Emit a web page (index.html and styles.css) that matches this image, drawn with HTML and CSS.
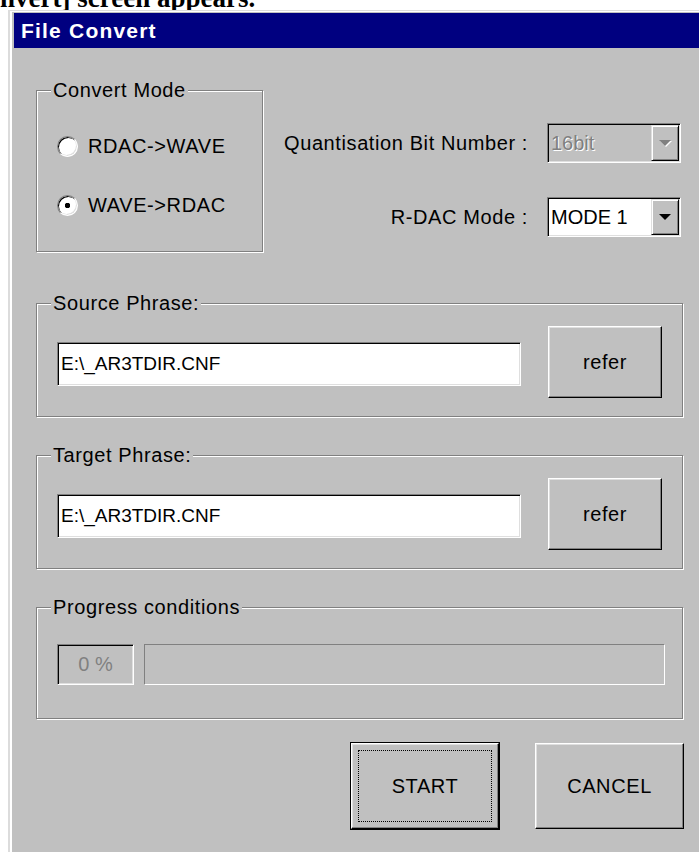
FILE: index.html
```html
<!DOCTYPE html>
<html lang="en">
<head>
<meta charset="utf-8">
<title>File Convert</title>
<link rel="stylesheet" href="styles.css">
</head>
<body>
  <div class="caption"><div class="caption-text">nvert] screen appears.</div></div>

  <div class="window">
    <div class="titlebar">File Convert</div>

    <div class="client">
      <div class="top-row">
        <div class="group mode-group">
          <div class="group-title">Convert Mode</div>
          <div class="radio-list">
            <div class="radio-row"><span class="radio"></span><span>RDAC-&gt;WAVE</span></div>
            <div class="radio-row"><span class="radio checked"></span><span>WAVE-&gt;RDAC</span></div>
          </div>
        </div>

        <div class="settings">
          <div class="setting-row">
            <span>Quantisation Bit Number :</span>
            <div class="combo disabled">
              <span class="combo-value">16bit</span>
              <span class="combo-btn"><span class="arrow"></span></span>
            </div>
          </div>
          <div class="setting-row">
            <span>R-DAC Mode :</span>
            <div class="combo">
              <span class="combo-value">MODE 1</span>
              <span class="combo-btn"><span class="arrow"></span></span>
            </div>
          </div>
        </div>
      </div>

      <div class="group path-group">
        <div class="group-title">Source Phrase:</div>
        <div class="path-row">
          <div class="textbox">E:\_AR3TDIR.CNF</div>
          <div class="button refer">refer</div>
        </div>
      </div>

      <div class="group path-group">
        <div class="group-title">Target Phrase:</div>
        <div class="path-row">
          <div class="textbox">E:\_AR3TDIR.CNF</div>
          <div class="button refer">refer</div>
        </div>
      </div>

      <div class="group progress-group">
        <div class="group-title">Progress conditions</div>
        <div class="progress-row">
          <div class="percent">0 %</div>
          <div class="progress-bar"></div>
        </div>
      </div>

      <div class="actions">
        <div class="button action default"><span class="focus">START</span></div>
        <div class="button action cancel">CANCEL</div>
      </div>
    </div>
  </div>
</body>
</html>
```

FILE: styles.css
```css
body {
  margin: 0;
  background: #fff;
  overflow: hidden;
  font-family: "Liberation Sans", Arial, sans-serif;
}

/* heading line of the surrounding manual page, cut by the top edge */
.caption {
  height: 10px;
  overflow: hidden;
}
.caption-text {
  margin-top: -15px;
  font: bold 27px/27px "Liberation Serif", "Times New Roman", serif;
  white-space: nowrap;
}

/* dialog frame */
.window {
  margin-left: 8px;
  width: 720px;
  min-height: 860px;
  background: #c0c0c0;
  border-top: 1px solid #dcdcdc;
  border-left: 2px solid #dcdcdc;
  box-shadow: inset 2px 1px #fff;
  padding: 2px 0 0 4px;
}

.titlebar {
  height: 35px;
  line-height: 35px;
  background: #000080;
  color: #fff;
  font-weight: bold;
  font-size: 21px;
  letter-spacing: 1.2px;
  padding-left: 7px;
}

.client {
  width: 647px;
  padding: 32px 0 0 22px;
  font-size: 20px;
  letter-spacing: 0.6px;
  color: #000;
}

/* etched group box */
.group {
  box-sizing: border-box;
  border: 1px solid #808080;
  box-shadow: inset 1px 1px #fff, 1px 1px #fff;
}
.group-title {
  width: fit-content;
  margin: -11px 0 0 14px;
  padding: 0 2px;
  line-height: 20px;
  background: #c0c0c0;
}

.top-row {
  display: flex;
  justify-content: space-between;
  align-items: flex-start;
}

.mode-group {
  width: 227px;
  height: 162px;
  margin-top: 10px;
}

.radio-list {
  display: flex;
  flex-direction: column;
  gap: 35px;
  padding: 34px 0 0 20px;
}
.radio-row {
  display: flex;
  align-items: center;
  gap: 10px;
  line-height: 24px;
}
.radio {
  width: 21px;
  height: 21px;
  box-sizing: border-box;
  border-radius: 50%;
  border: 1px solid;
  border-color: #808080 #fff #fff #808080;
  box-shadow: inset 1px 1px #000, inset -1px -1px #dfdfdf;
  background: #fff;
}
.radio.checked {
  background: radial-gradient(circle, #000 0 2.5px, #fff 3px);
}

/* right-hand settings */
.settings {
  display: flex;
  flex-direction: column;
  align-items: flex-end;
  gap: 34px;
  padding: 43px 2px 0 0;
}
.setting-row {
  display: flex;
  align-items: center;
  gap: 19px;
}

.combo {
  display: flex;
  width: 134px;
  height: 40px;
  box-sizing: border-box;
  border: 1px solid;
  border-color: #808080 #fff #fff #808080;
  box-shadow: inset 1px 1px #000, inset -1px -1px #dfdfdf;
  padding: 1px;
  background: #fff;
  letter-spacing: 0;
}
.combo-value {
  flex: 1;
  padding-left: 2px;
  line-height: 36px;
}
.combo-btn {
  width: 28px;
  box-sizing: border-box;
  display: flex;
  align-items: center;
  justify-content: center;
  background: #c0c0c0;
  border: 1px solid;
  border-color: #dfdfdf #000 #000 #dfdfdf;
  box-shadow: inset 1px 1px #fff, inset -1px -1px #808080;
}
.arrow {
  width: 0;
  height: 0;
  border-left: 6px solid transparent;
  border-right: 6px solid transparent;
  border-top: 6px solid #000;
}
.combo.disabled {
  background: #c0c0c0;
}
.combo.disabled .combo-value {
  color: #808080;
  text-shadow: 1px 1px #fff;
}
.combo.disabled .arrow {
  border-top-color: #808080;
  filter: drop-shadow(1px 1px #fff);
}

/* source / target path groups */
.path-group {
  height: 114px;
  margin-top: 51px;
}
.path-group + .path-group {
  margin-top: 38px;
}
.path-row {
  display: flex;
  align-items: center;
  gap: 27px;
  padding: 13px 0 0 20px;
}

.textbox {
  width: 464px;
  height: 44px;
  box-sizing: border-box;
  margin-top: 4px;
  border: 1px solid;
  border-color: #808080 #fff #fff #808080;
  box-shadow: inset 1px 1px #000, inset -1px -1px #dfdfdf;
  background: #fff;
  padding-left: 3px;
  line-height: 42px;
  font-size: 19px;
  letter-spacing: 0;
}

/* push buttons */
.button {
  display: flex;
  align-items: center;
  justify-content: center;
  box-sizing: border-box;
  background: #c0c0c0;
  border: 1px solid;
  border-color: #fff #000 #000 #fff;
  box-shadow: inset -1px -1px #808080, inset 1px 1px #dfdfdf;
}
.refer {
  width: 114px;
  height: 72px;
}

/* progress group */
.progress-group {
  height: 112px;
  margin-top: 38px;
}
.progress-row {
  display: flex;
  gap: 10px;
  padding: 27px 0 0 20px;
}
.percent {
  width: 77px;
  height: 41px;
  box-sizing: border-box;
  display: flex;
  align-items: center;
  justify-content: center;
  border: 1px solid;
  border-color: #808080 #fff #fff #808080;
  box-shadow: inset 1px 1px #000, inset -1px -1px #dfdfdf;
  color: #808080;
  letter-spacing: 0;
}
.progress-bar {
  width: 521px;
  height: 41px;
  box-sizing: border-box;
  border: 1px solid;
  border-color: #808080 #fff #fff #808080;
}

/* dialog buttons */
.actions {
  display: flex;
  justify-content: flex-end;
  gap: 36px;
  margin-top: 24px;
}
.action {
  height: 86px;
}
.default {
  width: 148px;
  padding: 6px;
  box-shadow: 0 0 0 1px #000, inset -1px -1px #808080, inset 1px 1px #dfdfdf;
}
.focus {
  flex: 1;
  align-self: stretch;
  display: flex;
  align-items: center;
  justify-content: center;
  border: 1px dotted #000;
}
.cancel {
  width: 149px;
  margin-right: -1px;
}
```
